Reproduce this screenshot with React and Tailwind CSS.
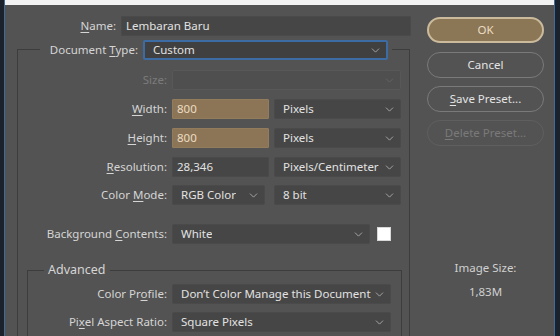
import React from 'react';
import { ChevronDown } from 'lucide-react';

const font = { fontFamily: '"Noto Sans", "Open Sans", sans-serif' };

// underlined access key
const U = ({ children }) => <span className="underline underline-offset-2">{children}</span>;

const Label = ({ w, children, dim }) => (
  <div className={`${w} shrink-0 text-right pr-[5px] whitespace-nowrap ${dim ? 'text-[#7b7b7b]' : 'text-[#d5d5d5]'}`}>{children}</div>
);

const Select = ({ w, value, disabled, focus }) => (
  <div
    className={`${w} h-[20px] flex items-center justify-between pl-[8px] pr-[4px] rounded-[2px] ${
      focus
        ? 'border-2 border-[#3c6ca3] bg-[#404040]'
        : disabled
        ? 'border border-[#585858] bg-[#4f4f4f]'
        : 'border border-[#4a4a4a] bg-[#464646]'
    }`}
  >
    <span className="text-[#e2e2e2] whitespace-nowrap overflow-hidden">{value}</span>
    <ChevronDown size={13} strokeWidth={1.5} className={`shrink-0 ${disabled ? 'text-[#676767]' : 'text-[#b8b8b8]'}`} />
  </div>
);

const Input = ({ w, value, beige }) => (
  <div
    className={`${w} h-[20px] flex items-center pl-[4px] rounded-[1px] ${
      beige ? 'bg-[#8b7556] text-[#ecdcc2] border border-[#927c5c]' : 'bg-[#464646] text-[#e2e2e2] border border-[#4a4a4a]'
    }`}
  >
    {value}
  </div>
);

const Btn = ({ children, primary, disabled }) => (
  <div
    className={`h-[26px] w-[117px] rounded-full flex items-center justify-center ${
      primary
        ? 'bg-[#8b7656] border-2 border-[#cbbb9c] text-[#eadcc3]'
        : disabled
        ? 'border border-[#5f5f5f] text-[#7a7a7a]'
        : 'border border-[#7a7a7a] text-[#e4e4e4]'
    }`}
  >
    {children}
  </div>
);

export default function App() {
  return (
    <div className="w-[560px] h-[336px] flex bg-[#1c222c] overflow-hidden text-[11.5px] leading-[16px]" style={font}>
      <div className="w-[4px] shrink-0 bg-[#1c222c]" />
      <div className="w-[1px] shrink-0 bg-[#3f6d98]" />
      <div className="w-[549px] shrink-0 flex flex-col">
        <div className="h-[5px] bg-[#f2f2f2]" />
        <div className="flex-1 bg-[#535353] flex">
          {/* form column */}
          <div className="w-[417px] shrink-0 flex flex-col">
            <div className="mt-[11px] h-[20px] flex items-center">
              <Label w="w-[116px]">
                <U>N</U>ame:
              </Label>
              <Input w="w-[290px]" value="Lembaran Baru" />
            </div>

            {/* document group */}
            <div className="ml-[12px] mt-[13px] w-[393px] flex-1 border-l border-t border-r border-[#3d3d3d] flex flex-col">
              <div className="-mt-[10px] ml-[22px] w-[352px] h-[20px] flex items-center bg-[#535353]">
                <Label w="w-[103px]">
                  Document <U>T</U>ype:
                </Label>
                <Select w="w-[245px]" value="Custom" focus />
              </div>

              <div className="mt-[10px] h-[20px] flex items-center">
                <Label w="w-[154px]" dim>
                  Size:
                </Label>
                <Select w="w-[229px]" value="" disabled />
              </div>

              <div className="mt-[9px] h-[20px] flex items-center">
                <Label w="w-[154px]">
                  <U>W</U>idth:
                </Label>
                <Input w="w-[97px]" value="800" beige />
                <div className="w-[5px]" />
                <Select w="w-[127px]" value="Pixels" />
              </div>

              <div className="mt-[9px] h-[20px] flex items-center">
                <Label w="w-[154px]">
                  <U>H</U>eight:
                </Label>
                <Input w="w-[97px]" value="800" beige />
                <div className="w-[5px]" />
                <Select w="w-[127px]" value="Pixels" />
              </div>

              <div className="mt-[9px] h-[20px] flex items-center">
                <Label w="w-[154px]">
                  <U>R</U>esolution:
                </Label>
                <Input w="w-[97px]" value="28,346" />
                <div className="w-[5px]" />
                <Select w="w-[127px]" value="Pixels/Centimeter" />
              </div>

              <div className="mt-[8px] h-[20px] flex items-center">
                <Label w="w-[154px]">
                  Color <U>M</U>ode:
                </Label>
                <Select w="w-[93px]" value="RGB Color" />
                <div className="w-[9px]" />
                <Select w="w-[127px]" value="8 bit" />
              </div>

              <div className="mt-[19px] h-[20px] flex items-center">
                <Label w="w-[154px]">
                  Background <U>C</U>ontents:
                </Label>
                <Select w="w-[198px]" value="White" />
                <div className="ml-[7px] w-[14px] h-[14px] bg-white border border-[#d8d8d8]" />
              </div>

              {/* advanced group */}
              <div className="ml-[9px] mt-[26px] w-[375px] flex-1 border-l border-t border-r border-[#3d3d3d] flex flex-col">
                <div className="-mt-[9px] ml-[16px] self-start px-[4px] bg-[#535353] text-[#d5d5d5] text-[12.5px] leading-[16px]">
                  Advanced
                </div>
                <div className="mt-[6px] h-[20px] flex items-center">
                  <Label w="w-[144px]">
                    Color Pr<U>o</U>file:
                  </Label>
                  <Select w="w-[219px]" value="Don’t Color Manage this Document" />
                </div>
                <div className="mt-[8px] h-[20px] flex items-center">
                  <Label w="w-[144px]">
                    Pi<U>x</U>el Aspect Ratio:
                  </Label>
                  <Select w="w-[219px]" value="Square Pixels" />
                </div>
              </div>
            </div>
          </div>

          {/* buttons column */}
          <div className="ml-[5px] w-[117px] shrink-0 flex flex-col items-center pt-[12px]">
            <Btn primary>OK</Btn>
            <div className="h-[9px]" />
            <Btn>Cancel</Btn>
            <div className="h-[8px]" />
            <Btn>
              <span>
                <U>S</U>ave Preset...
              </span>
            </Btn>
            <div className="h-[8px]" />
            <Btn disabled>
              <span>
                <U>D</U>elete Preset...
              </span>
            </Btn>
            <div className="mt-[114px] text-[#d0d0d0]">Image Size:</div>
            <div className="mt-[8px] text-[#d0d0d0]">1,83M</div>
          </div>
        </div>
      </div>
      <div className="w-[1px] shrink-0 bg-[#3f6d98]" />
      <div className="w-[5px] shrink-0 bg-[#1c222c]" />
    </div>
  );
}
